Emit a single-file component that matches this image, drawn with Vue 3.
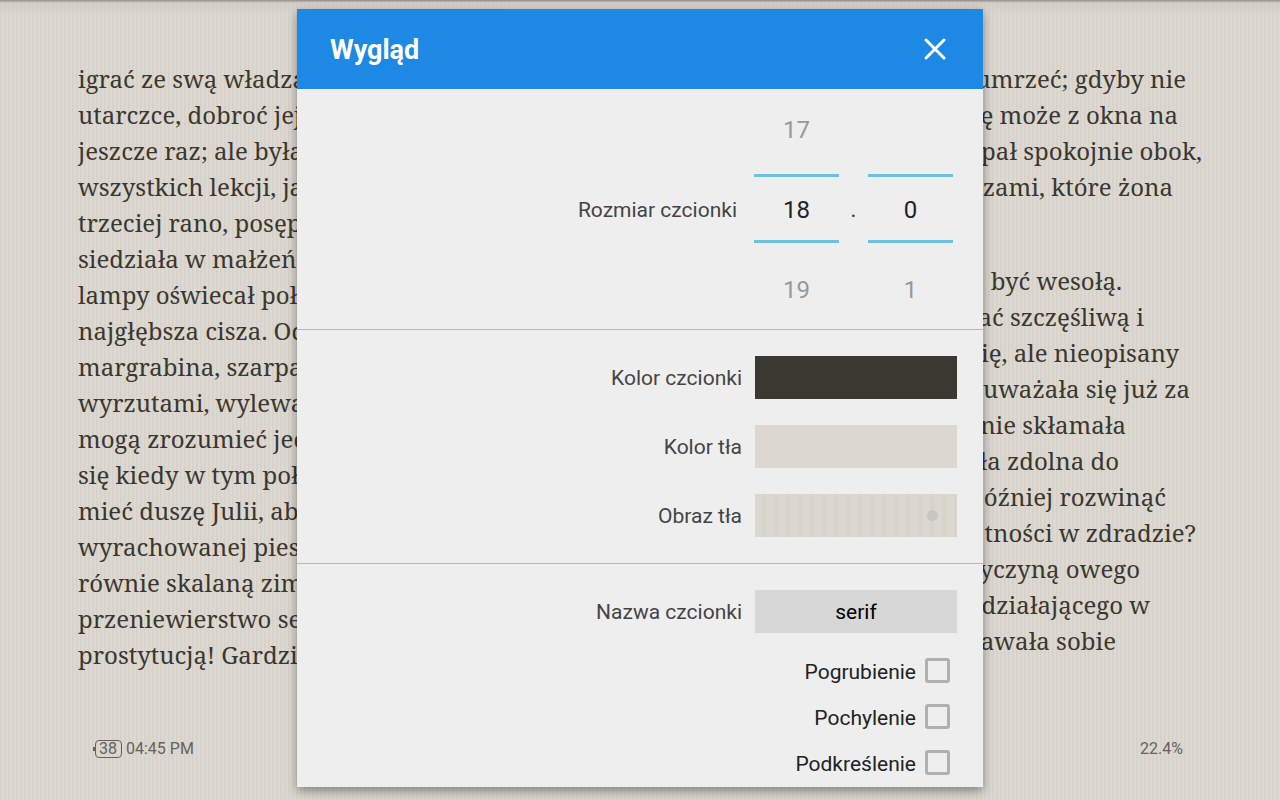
<script setup>
import { ref } from 'vue'

const leftLines = [
  'igrać ze swą władzą',
  'utarczce, dobroć jej',
  'jeszcze raz; ale była',
  'wszystkich lekcji, ja',
  'trzeciej rano, posęp',
  'siedziała w małżeń',
  'lampy oświecał poł',
  'najgłębsza cisza. Od',
  'margrabina, szarpa',
  'wyrzutami, wylewa',
  'mogą zrozumieć jed',
  'się kiedy w tym poł',
  'mieć duszę Julii, ab',
  'wyrachowanej pies',
  'równie skalaną zim',
  'przeniewierstwo se',
  'prostytucją! Gardzi',
]

// rag: free space between the end of the line and the column edge
const rightParagraphs = [
  [
    { text: 'umrzeć; gdyby nie', rag: 16 },
    { text: 'się może z okna na', rag: 24 },
    { text: 'spał spokojnie obok,', rag: 0 },
    { text: 'czami, które żona', rag: 29 },
  ],
  [
    { text: 'być wesołą.', rag: 80 },
    { text: 'ać szczęśliwą i', rag: 58 },
    { text: 'się, ale nieopisany', rag: 23 },
    { text: 'uważała się już za', rag: 12 },
    { text: 'nie skłamała', rag: 76 },
    { text: 'ła zdolna do', rag: 83 },
    { text: 'później rozwinąć', rag: 36 },
    { text: 'tności w zdradzie?', rag: 6 },
    { text: 'yczyną owego', rag: 62 },
    { text: 'działającego w', rag: 52 },
    { text: 'dawała sobie', rag: 86 },
  ],
]

const whole = ref(18)
const tenth = ref(0)
const styles = ref([
  { id: 'bold', label: 'Pogrubienie', on: false },
  { id: 'italic', label: 'Pochylenie', on: false },
  { id: 'underline', label: 'Podkreślenie', on: false },
])
</script>

<template>
  <div class="reader">
    <main class="book">
      <div class="column">
        <p><span v-for="line in leftLines" :key="line" class="line">{{ line }}</span></p>
      </div>
      <div class="column right">
        <p v-for="(lines, i) in rightParagraphs" :key="i">
          <span v-for="line in lines" :key="line.text" class="line" :style="{ paddingRight: line.rag + 'px' }">{{ line.text }}</span>
        </p>
      </div>
    </main>

    <footer class="status">
      <span class="clock">
        <span class="battery">38</span>
        <span>04:45 PM</span>
      </span>
      <span>22.4%</span>
    </footer>

    <div class="overlay">
      <section class="dialog" role="dialog" aria-labelledby="dialog-title">
        <header class="bar">
          <h1 id="dialog-title">Wygląd</h1>
          <button class="close" type="button" aria-label="Zamknij">
            <svg viewBox="0 0 24 24" width="24" height="24" fill="none" stroke="#fff" stroke-width="3" stroke-linecap="round">
              <path d="M3 3 21 21M21 3 3 21" />
            </svg>
          </button>
        </header>

        <div class="group size">
          <label class="caption" for="size-whole">Rozmiar czcionki</label>
          <div class="picker">
            <button type="button" class="before" @click="whole--">{{ whole - 1 }}</button>
            <input id="size-whole" v-model.number="whole" type="text" inputmode="numeric" />
            <button type="button" class="after" @click="whole++">{{ whole + 1 }}</button>
          </div>
          <span class="dot">.</span>
          <div class="picker">
            <button type="button" class="before" :disabled="tenth === 0" aria-label="Mniej" @click="tenth--">{{ tenth > 0 ? tenth - 1 : '' }}</button>
            <input v-model.number="tenth" type="text" inputmode="numeric" aria-label="Część dziesiętna" />
            <button type="button" class="after" @click="tenth++">{{ tenth + 1 }}</button>
          </div>
        </div>

        <div class="group colors">
          <div class="row">
            <label class="caption" for="font-color">Kolor czcionki</label>
            <button id="font-color" type="button" class="field ink"></button>
          </div>
          <div class="row">
            <label class="caption" for="back-color">Kolor tła</label>
            <button id="back-color" type="button" class="field paper"></button>
          </div>
          <div class="row">
            <label class="caption" for="back-image">Obraz tła</label>
            <button id="back-image" type="button" class="field texture"><span class="mark"></span></button>
          </div>
        </div>

        <div class="group fonts">
          <div class="row">
            <label class="caption" for="font-name">Nazwa czcionki</label>
            <button id="font-name" type="button" class="field name">serif</button>
          </div>
          <div class="checks">
            <label v-for="s in styles" :key="s.id" class="check" :for="s.id">
              <span class="check-text">{{ s.label }}</span>
              <input :id="s.id" v-model="s.on" type="checkbox" />
            </label>
          </div>
        </div>
      </section>
    </div>
  </div>
</template>

<style>
body {
  background: #dad6cf;
}
</style>

<style scoped>
.reader {
  position: relative;
  display: flex;
  flex-direction: column;
  justify-content: space-between;
  box-sizing: border-box;
  min-height: 100vh;
  padding: 61px 78px 39px;
  overflow: hidden;
  font-family: Roboto, "Liberation Sans", sans-serif;
  background:
    linear-gradient(#9c9793 0 1px, #b3aeaa 1px 2px, #cbc7c2 2px 3px, rgba(203, 199, 194, 0.6) 3px, rgba(203, 199, 194, 0) 16px),
    repeating-linear-gradient(90deg, #d6d2ca 0 1px, #d9d5ce 1px 2px, #ddd9d2 2px 4px);
}

.book {
  display: grid;
  grid-template-columns: 1fr 1fr;
  color: #3a372f;
  font-family: "Noto Serif", "Droid Serif", "DejaVu Serif Condensed", "DejaVu Serif", serif;
  font-size: 24px;
  line-height: 36px;
}

.book p {
  margin: 0 0 58px;
}

.book p:last-child {
  margin-bottom: 0;
}

.line {
  display: block;
  white-space: nowrap;
}

.right {
  text-align: right;
}

.status {
  display: flex;
  justify-content: space-between;
  padding: 0 19px 0 17px;
  color: #66625b;
  font-size: 16px;
  line-height: 24px;
}

.clock {
  display: flex;
  align-items: center;
  gap: 4px;
}

.battery {
  position: relative;
  padding: 0 4px 0 3px;
  border: 1px solid #66625b;
  border-radius: 4px;
  line-height: 16px;
}

.battery::before {
  content: "";
  position: absolute;
  top: 6px;
  left: -3px;
  width: 2px;
  height: 4px;
  background: #66625b;
}

.overlay {
  position: absolute;
  inset: 0;
  display: flex;
  justify-content: center;
  align-items: flex-start;
  padding: 9px 16px;
}

.dialog {
  width: 100%;
  max-width: 686px;
  background: #eee;
  box-shadow: 0 4px 10px rgba(0, 0, 0, 0.4);
}

.bar {
  display: flex;
  align-items: center;
  justify-content: space-between;
  height: 80px;
  padding: 0 36px 0 33px;
  background: #1e88e5;
}

.bar h1 {
  margin: 0;
  padding-top: 2px;
  color: #fff;
  font-size: 27px;
  font-weight: 700;
}

button,
input {
  box-sizing: border-box;
  margin: 0;
  padding: 0;
  border: 0;
  border-radius: 0;
  background: none;
  font: inherit;
}

.close {
  display: flex;
}

.group + .group {
  border-top: 1px solid #b8b8b8;
}

.group {
  padding: 26px;
  color: #444;
  font-size: 21px;
}

.caption {
  padding-top: 1px;
}

.group.size {
  display: flex;
  justify-content: flex-end;
  align-items: center;
  padding: 0 30px 0 26px;
}

.picker {
  display: flex;
  flex-direction: column;
  width: 85px;
}

.picker button {
  height: 85px;
  color: #989898;
  font-size: 24px;
}

.picker .before {
  padding-bottom: 3px;
}

.picker .after {
  height: 86px;
  padding-top: 8px;
}

.picker input {
  width: 100%;
  height: 69px;
  padding-top: 2px;
  border: solid #6fc0de;
  border-width: 3px 0;
  color: #222;
  font-size: 24px;
  text-align: center;
}

.size .caption {
  margin-right: 17px;
}

.dot {
  width: 29px;
  font-size: 24px;
  text-align: center;
}

.colors,
.row,
.check {
  display: flex;
}

.colors {
  flex-direction: column;
  gap: 26px;
}

.row {
  justify-content: flex-end;
  align-items: center;
  gap: 13px;
}

.field {
  width: 202px;
  height: 43px;
}

.ink {
  background: #3a3830;
}

.paper {
  background: #dcd8d1;
}

.texture {
  display: flex;
  justify-content: flex-end;
  align-items: center;
  padding-right: 19px;
  background: repeating-linear-gradient(90deg, #dcd8d1 0 6px, #d7d4cc 8px 11px, #dcd8d1 12px);
}

.mark {
  width: 11px;
  height: 11px;
  border-radius: 50%;
  background: #c6c6c6;
}

.name {
  padding-top: 1px;
  background: #d7d7d7;
  color: #000;
}

.fonts {
  padding-bottom: 2px;
}

.checks {
  display: flex;
  flex-direction: column;
  align-items: flex-end;
  padding: 14px 7px 0 0;
}

.check {
  align-items: center;
  gap: 9px;
  height: 46px;
  color: #222;
}

.check-text {
  padding-top: 3px;
}

.check input {
  appearance: none;
  width: 25px;
  height: 25px;
  border: 3px solid #b0b0b0;
  border-radius: 3px;
}

.check input:checked {
  background: #6fc0de;
}
</style>
